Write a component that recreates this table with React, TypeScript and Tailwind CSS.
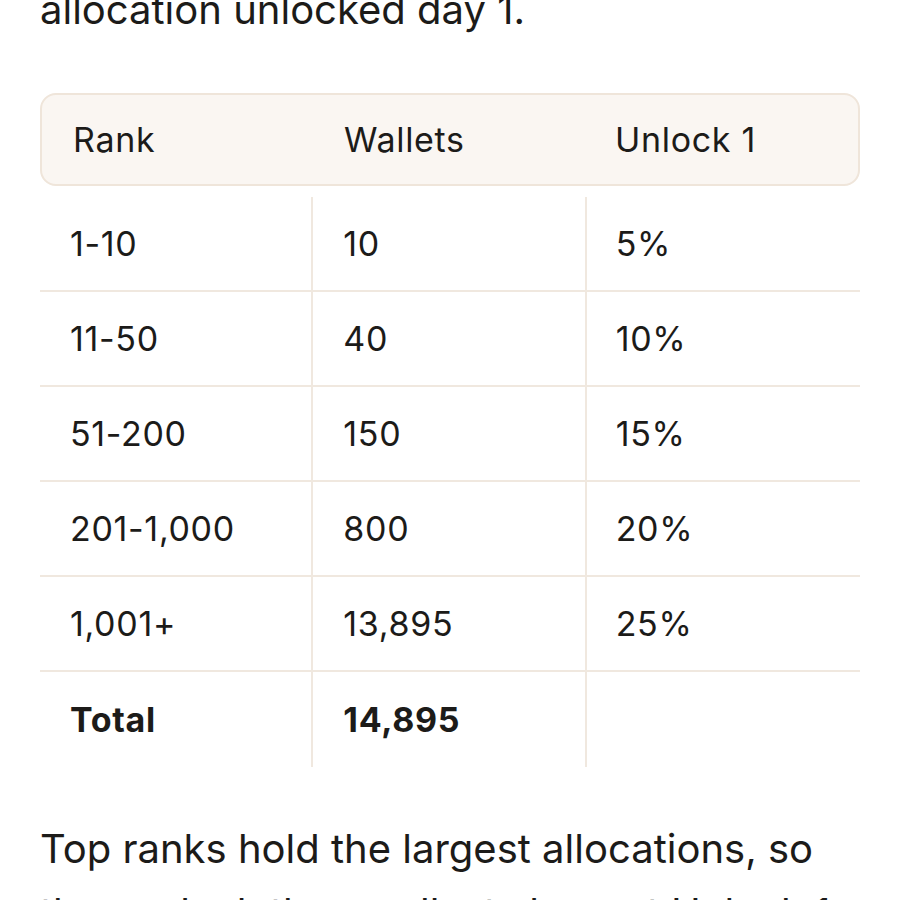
const rows = [
  { rank: "1-10", wallets: "10", unlock: "5%" },
  { rank: "11-50", wallets: "40", unlock: "10%" },
  { rank: "51-200", wallets: "150", unlock: "15%" },
  { rank: "201-1,000", wallets: "800", unlock: "20%" },
  { rank: "1,001+", wallets: "13,895", unlock: "25%" },
];

const App = () => {
  return (
    <div className="h-[900px] overflow-hidden bg-white font-['Inter',sans-serif] text-[#1c1b19]">
      <div className="px-10 mt-[-22px]">
        <p className="text-[40px] leading-[64px]">allocation unlocked day 1.</p>

        {/* Tabel */}
        <div className="mt-[51px]">
          <div className="grid grid-cols-3 h-[93px] items-center rounded-[16px] border-2 border-[#efe5da] bg-[#faf6f2] text-[34px] tracking-[0.02em]">
            <div className="pl-[31px]">Rank</div>
            <div className="pl-[30px]">Wallets</div>
            <div className="pl-[29px]">Unlock 1</div>
          </div>

          <div className="mt-[11px] text-[34px] tracking-[0.02em]">
            {rows.map((row) => (
              <div
                key={row.rank}
                className="grid grid-cols-3 h-[95px] border-b-2 border-[#f0e8df]"
              >
                <div className="flex items-center pl-[30px]">{row.rank}</div>
                <div className="flex items-center pl-[30px] border-l-2 border-[#f0e8df] -ml-[2px]">
                  {row.wallets}
                </div>
                <div className="flex items-center pl-[29px] border-l-2 border-[#f0e8df] -ml-[2px]">
                  {row.unlock}
                </div>
              </div>
            ))}
            <div className="grid grid-cols-3 h-[95px] font-bold">
              <div className="flex items-center pl-[30px]">Total</div>
              <div className="flex items-center pl-[30px] border-l-2 border-[#f0e8df] -ml-[2px]">
                14,895
              </div>
              <div className="border-l-2 border-[#f0e8df] -ml-[2px]" />
            </div>
          </div>
        </div>

        <p className="mt-[50px] text-[40px] leading-[64px]">
          Top ranks hold the largest allocations, so they unlock the smallest
          share at Unlock 1.
        </p>
      </div>
    </div>
  );
};

export default App;
